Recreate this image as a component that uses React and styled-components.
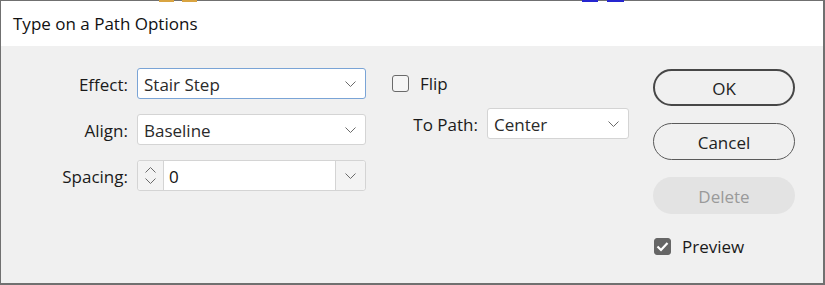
import React from 'react';
import styled, { createGlobalStyle } from 'styled-components';

const Global = createGlobalStyle`
  html, body { margin: 0; padding: 0; background: #ffffff; }
  body { font-family: "Open Sans", "Noto Sans", sans-serif; color: #1a1a1a; }
  * { box-sizing: border-box; }
`;

const Window = styled.div`
  position: relative;
  width: 825px;
  height: 285px;
  border: 1px solid #707070;
  border-bottom-width: 2px;
  border-right-width: 2px;
  display: flex;
  flex-direction: column;
  background: #f0f0f0;
`;

const EdgeMark = styled.span`
  position: absolute;
  top: -1px;
  height: 2px;
  width: ${p => p.w}px;
  background: ${p => p.color};
`;

const TitleBar = styled.div`
  height: 45px;
  background: #ffffff;
  display: flex;
  align-items: center;
  padding: 0 0 0 12px;
  font-size: 17px;
  color: #111;
`;

const Body = styled.div`
  flex: 1;
  display: flex;
  padding: 22px 0 0 39px;
`;

const FieldGrid = styled.div`
  display: grid;
  grid-template-columns: 88px 229px;
  column-gap: 9px;
  row-gap: 15px;
  grid-auto-rows: 31px;
  align-items: center;
`;

const Label = styled.label`
  text-align: right;
  font-size: 17px;
  color: #1a1a1a;
  white-space: nowrap;
  padding-top: 1px;
`;

const Select = styled.div`
  height: 31px;
  width: ${p => (p.w ? `${p.w}px` : '100%')};
  background: #ffffff;
  border: 1px solid ${p => (p.focused ? '#7aa4d6' : '#d4d4d4')};
  border-radius: 3px;
  display: flex;
  align-items: center;
  padding: 1px 9px 0 6px;
  font-size: 17px;
  color: #2a2a2a;
`;

const SelectText = styled.span`
  flex: 1;
`;

const Combo = styled.div`
  height: 31px;
  display: flex;
  background: #ffffff;
  border: 1px solid #d4d4d4;
  border-radius: 3px;
`;

const Stepper = styled.div`
  width: 26px;
  background: #f3f3f3;
  border-right: 1px solid #d4d4d4;
  display: flex;
  flex-direction: column;
  align-items: center;
  justify-content: center;
  gap: 5px;
  border-radius: 3px 0 0 3px;
`;

const ComboInput = styled.div`
  flex: 1;
  display: flex;
  align-items: center;
  padding: 1px 0 0 5px;
  font-size: 17px;
  color: #111;
`;

const ComboButton = styled.div`
  width: 30px;
  background: #f3f3f3;
  border-left: 1px solid #d4d4d4;
  display: flex;
  align-items: center;
  justify-content: center;
  border-radius: 0 3px 3px 0;
`;

const Middle = styled.div`
  margin-left: 26px;
  width: 237px;
  display: flex;
  flex-direction: column;
`;

const CheckRow = styled.div`
  display: flex;
  align-items: center;
  gap: 11px;
  height: 31px;
  font-size: 17px;
  color: #1a1a1a;
`;

const Box = styled.span`
  width: 17px;
  height: 17px;
  border-radius: 3px;
  border: 1px solid ${p => (p.checked ? '#666666' : '#6a6a6a')};
  background: ${p => (p.checked ? '#666666' : '#f5f5f5')};
  display: flex;
  align-items: center;
  justify-content: center;
`;

const PathRow = styled.div`
  display: flex;
  align-items: center;
  justify-content: flex-end;
  gap: 9px;
  margin-top: 9px;
`;

const Actions = styled.div`
  margin-left: 24px;
  width: 142px;
  display: flex;
  flex-direction: column;
  gap: 17px;
  padding-top: 1px;
`;

const Button = styled.div`
  height: 37px;
  border-radius: 19px;
  display: flex;
  align-items: center;
  justify-content: center;
  padding-top: 1px;
  font-size: 17px;
  color: ${p => (p.disabled ? '#9a9a9a' : '#222')};
  background: ${p => (p.disabled ? '#e3e3e3' : '#f0f0f0')};
  border: ${p => (p.primary ? '2px solid #474747' : p.disabled ? 'none' : '1px solid #5a5a5a')};
`;

const PreviewRow = styled(CheckRow)`
  margin-top: 0;
  padding-left: 1px;
`;

const Chevron = ({ up }) => (
  <svg width="11" height="6" viewBox="0 0 11 6">
    <path
      d={up ? 'M0.5 5.5 L5.5 0.5 L10.5 5.5' : 'M0.5 0.5 L5.5 5.5 L10.5 0.5'}
      fill="none"
      stroke="#6a6a6a"
      strokeWidth="1"
    />
  </svg>
);

const Check = () => (
  <svg width="13" height="11" viewBox="0 0 13 11">
    <path d="M1.5 5.5 L5 9 L11.5 2" fill="none" stroke="#ffffff" strokeWidth="2.2" />
  </svg>
);

export default function App() {
  return (
    <>
      <Global />
      <Window>
        <EdgeMark color="#d9a441" w={15} style={{ left: 158 }} />
        <EdgeMark color="#d9a441" w={15} style={{ left: 181 }} />
        <EdgeMark color="#2626d0" w={16} style={{ left: 581 }} />
        <EdgeMark color="#2626d0" w={17} style={{ left: 606 }} />
        <TitleBar>Type on a Path Options</TitleBar>
        <Body>
          <FieldGrid>
            <Label>Effect:</Label>
            <Select focused>
              <SelectText>Stair Step</SelectText>
              <Chevron />
            </Select>
            <Label>Align:</Label>
            <Select>
              <SelectText>Baseline</SelectText>
              <Chevron />
            </Select>
            <Label>Spacing:</Label>
            <Combo>
              <Stepper>
                <Chevron up />
                <Chevron />
              </Stepper>
              <ComboInput>0</ComboInput>
              <ComboButton>
                <Chevron />
              </ComboButton>
            </Combo>
          </FieldGrid>
          <Middle>
            <CheckRow>
              <Box />
              Flip
            </CheckRow>
            <PathRow>
              <Label>To Path:</Label>
              <Select w={142}>
                <SelectText>Center</SelectText>
                <Chevron />
              </Select>
            </PathRow>
          </Middle>
          <Actions>
            <Button primary>OK</Button>
            <Button>Cancel</Button>
            <Button disabled>Delete</Button>
            <PreviewRow>
              <Box checked>
                <Check />
              </Box>
              Preview
            </PreviewRow>
          </Actions>
        </Body>
      </Window>
    </>
  );
}
